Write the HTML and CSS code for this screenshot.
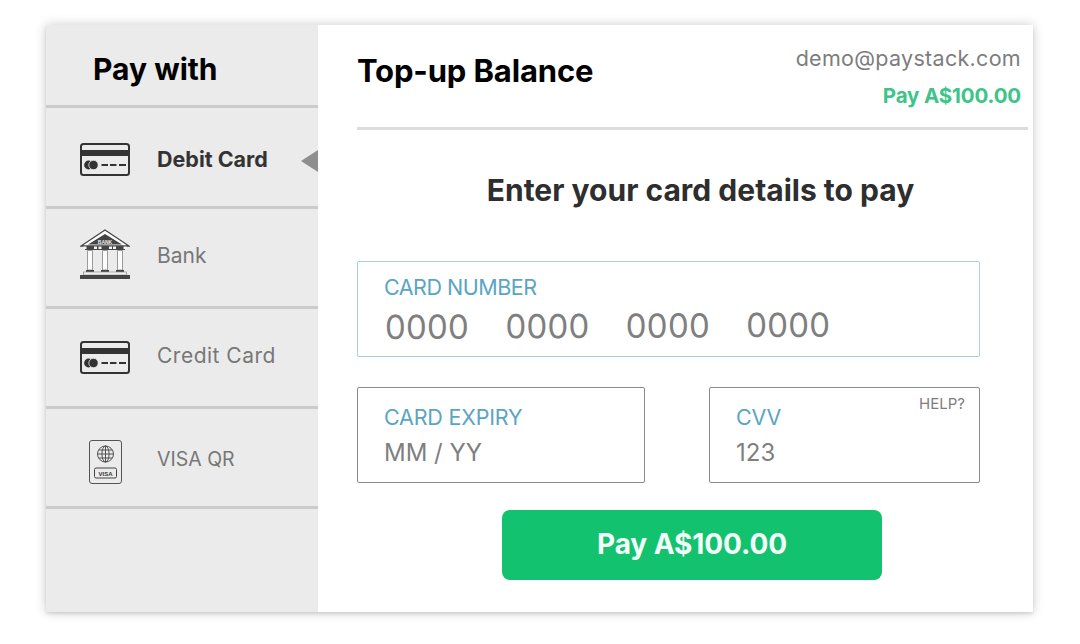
FILE: index.html
```html
<!DOCTYPE html>
<html lang="en">
<head>
<meta charset="utf-8">
<title>Top-up Balance</title>
<link rel="stylesheet" href="styles.css">
</head>
<body>
<svg class="defs" width="0" height="0" aria-hidden="true">
  <symbol id="card" viewBox="0 0 50 33">
    <rect x="1" y="1" width="48" height="31" rx="2.5" fill="none" stroke="#333" stroke-width="2"/>
    <rect x="1" y="7" width="48" height="6" fill="#333"/>
    <circle cx="8.500" cy="22" r="4.400" fill="#333"/>
    <circle cx="13.500" cy="22" r="4.700" fill="#333" stroke="#ebebeb" stroke-width=".8"/>
    <path d="M21.500 22h6.500M30 22h6.500M39 22h7" stroke="#333" stroke-width="2"/>
  </symbol>
</svg>
<main class="card">
  <aside class="side">
    <h2 class="side-title">Pay with</h2>
    <div class="method method-active">
      <svg class="ico-card"><use href="#card"/></svg>
      <span class="method-label">Debit Card</span>
      <span class="pointer"></span>
    </div>
    <div class="method method-bank">
      <svg class="ico-bank" viewBox="0 0 50 50">
        <path d="M25 1 1 17h48z" fill="#fff" stroke="#444" stroke-width="1.300"/>
        <path d="M25 5 8 15.500h34z" fill="#444"/>
        <text x="25" y="14.500" class="ico-text" text-anchor="middle">BANK</text>
        <rect x="5" y="17" width="40" height="4" fill="#444"/>
        <path d="M3.500 17.500h3v2.500h-3zM14 17.500h3v2.500h-3zM18.500 17.500h3v2.500h-3zM29 17.500h3v2.500h-3zM33 17.500h3v2.500h-3zM43.500 17.500h3v2.500h-3z" fill="#f4f4f4"/>
        <path d="M7.500 21.500h5v19.500h-5zM22.500 21.500h5v19.500h-5zM37.500 21.500h5v19.500h-5z" fill="#fbfbfb" stroke="#9a9a9a"/>
        <path d="M6 41h8v2H6zM21 41h8v2h-8zM36 41h8v2h-8z" fill="#444"/>
        <rect x="3.500" y="43" width="43" height="3" fill="#f2f2f2" stroke="#8a8a8a" stroke-width=".7"/>
        <rect x="0" y="46" width="50" height="4" fill="#444"/>
      </svg>
      <span class="method-label muted">Bank</span>
    </div>
    <div class="method method-credit">
      <svg class="ico-card"><use href="#card"/></svg>
      <span class="method-label muted">Credit Card</span>
    </div>
    <div class="method method-qr">
      <svg class="ico-qr" viewBox="0 0 33 44">
        <rect x=".5" y=".5" width="32" height="43" rx="2.500" fill="none" stroke="#555"/>
        <g fill="none" stroke="#444" stroke-width=".9">
          <circle cx="16.500" cy="14" r="8"/>
          <ellipse cx="16.500" cy="14" rx="3.600" ry="8"/>
          <path d="M16.500 6v16M8.500 14h16M9.800 10h13.400M9.800 18h13.400"/>
        </g>
        <rect x="5.500" y="28" width="22" height="10" rx="1.500" fill="none" stroke="#444"/>
        <text x="16.500" y="35.500" class="ico-text visa" text-anchor="middle">VISA</text>
      </svg>
      <span class="method-label muted">VISA QR</span>
    </div>
  </aside>
  <section class="pane">
    <header class="head">
      <h1 class="title">Top-up Balance</h1>
      <div class="who">
        <div class="email">demo@paystack.com</div>
        <div class="amount">Pay A$100.00</div>
      </div>
    </header>
    <h2 class="prompt">Enter your card details to pay</h2>
    <div class="field field-number">
      <div class="label">CARD NUMBER</div>
      <div class="digits"><span>0000</span><span>0000</span><span>0000</span><span>0000</span></div>
    </div>
    <div class="row">
      <div class="field field-expiry">
        <div class="label">CARD EXPIRY</div>
        <div class="value">MM / YY</div>
      </div>
      <div class="field field-cvv">
        <span class="help">HELP?</span>
        <div class="label">CVV</div>
        <div class="value">123</div>
      </div>
    </div>
    <button class="pay" type="button">Pay A$100.00</button>
  </section>
</main>
</body>
</html>
```
FILE: styles.css
```css
* { box-sizing: border-box; }
html, body { margin: 0; height: 100%; background: #fff; }
body { padding: 25px 0 0 46px; font-family: "Inter", "Liberation Sans", sans-serif; overflow: hidden; }
.defs { position: absolute; }
.card {
  display: flex;
  width: 987px;
  height: 587px;
  background: #fff;
  box-shadow: 0 0 11px rgba(0, 0, 0, .2), 0 2px 3px rgba(0, 0, 0, .1);
}
.side { width: 272px; flex: none; background: #ebebeb; }
.side-title {
  margin: 0;
  height: 83px;
  padding: 26px 0 0 47px;
  font-size: 30px;
  line-height: 36px;
  font-weight: 700;
  color: #000;
  border-bottom: 3px solid #cbcbcb;
}
.method {
  position: relative;
  display: flex;
  align-items: center;
  height: 100px;
  padding-left: 34px;
  border-bottom: 3px solid #cbcbcb;
}
.method-active { height: 101px; padding-top: 4px; }
.method-qr { padding-top: 8px; }
.ico-card { width: 50px; height: 33px; flex: none; margin-right: 27px; }
.ico-bank { width: 50px; height: 50px; flex: none; margin-right: 27px; margin-bottom: 8px; }
.ico-qr { width: 33px; height: 44px; flex: none; margin: 0 35px 0 9px; }
.ico-text { font-family: "Liberation Sans", sans-serif; font-size: 5px; font-weight: 700; fill: #eee; }
.ico-text.visa { font-size: 6px; fill: #333; }
.method-label { font-size: 21.500px; font-weight: 700; color: #333; }
.method-label.muted { font-size: 21px; font-weight: 400; color: #777; }
.method-bank .method-label { margin-bottom: 4px; }
.method-credit .method-label { margin-bottom: 4px; letter-spacing: .5px; }
.method-qr .method-label { margin-bottom: 6px; font-size: 19.500px; }
.pointer {
  position: absolute;
  right: 0;
  top: 42px;
  border-style: solid;
  border-width: 11px 17px 11px 0;
  border-color: transparent #8f8f8f transparent transparent;
}
.pane { flex: 1; padding-left: 39px; display: flex; flex-direction: column; align-items: flex-start; }
.head {
  width: 671px;
  height: 105px;
  display: flex;
  justify-content: space-between;
  border-bottom: 3px solid #dcdcdc;
}
.title { margin: 26px 0 0; font-size: 31px; line-height: 40px; font-weight: 700; color: #000; letter-spacing: -.15px; }
.who { padding: 18px 7px 0 0; text-align: right; }
.email { font-size: 21.500px; line-height: 30px; color: #7d7d7d; letter-spacing: .3px; }
.amount { margin-top: 8px; font-size: 20.500px; line-height: 30px; font-weight: 700; color: #3cc489; letter-spacing: -.15px; }
.prompt {
  width: 687px;
  margin: 40px 0 0;
  text-align: center;
  font-size: 30px;
  line-height: 40px;
  font-weight: 700;
  color: #2e2e2e;
}
.field {
  position: relative;
  height: 96px;
  padding: 16px 26px 0;
  border: 1px solid #8a8a8a;
  border-radius: 2px;
}
.field-number { width: 623px; margin-top: 51px; padding-top: 12px; border-color: #a9cfdc; }
.label { font-size: 21.500px; line-height: 26px; color: #5aa5c2; letter-spacing: -.2px; }
.field-number .label { letter-spacing: -.5px; }
.digits { display: flex; margin: 6px 0 0 1px; font-size: 33px; line-height: 42px; color: #7f7f7f; transform: rotate(-.3deg); transform-origin: left center; }
.digits span { width: 120.400px; letter-spacing: .2px; }
.value { margin-top: 5px; font-size: 24px; line-height: 36px; color: #7f7f7f; }
.row { width: 623px; margin-top: 30px; display: flex; justify-content: space-between; }
.field-expiry { width: 288px; }
.field-cvv { width: 271px; }
.help { position: absolute; right: 14px; top: 6px; font-size: 15px; line-height: 20px; color: #7d7d7d; }
.pay {
  width: 380px;
  height: 70px;
  margin: 27px 0 0 145px;
  padding: 0 0 2px;
  border: 0;
  border-radius: 8px;
  background: #12c26e;
  color: #f4fff9;
  font-family: inherit;
  font-size: 28px;
  font-weight: 700;
  letter-spacing: -.1px;
}
```
